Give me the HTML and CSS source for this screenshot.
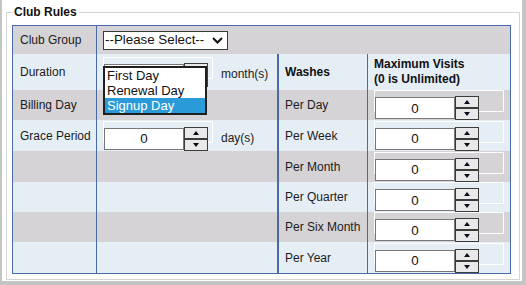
FILE: index.html
```html
<!doctype html>
<html lang="en">
<head>
    <meta charset="UTF-8">
    <title>Club Rules</title>
    <link rel="stylesheet" href="styles.css">
</head>
<body>
    <fieldset class="rules">
        <legend>Club Rules</legend>
        <table class="grid">
            <colgroup>
                <col class="c-label">
                <col class="c-field">
                <col class="c-wash">
                <col class="c-max">
            </colgroup>
            <tr class="odd h28">
                <td class="label">Club Group</td>
                <td class="field" colspan="3">
                    <div class="select">
                        <span>--Please Select--</span>
                        <svg width="11" height="7" viewBox="0 0 11 7"><polyline points="1,1 5.5,5.5 10,1" fill="none" stroke="#111" stroke-width="2"/></svg>
                    </div>
                </td>
            </tr>
            <tr class="even h36">
                <td class="label">Duration</td>
                <td class="field">
                    <div class="line">
                        <div class="num">
                            <input type="text" value="0">
                            <div class="spin"><span class="up"></span><span class="down"></span></div>
                            <ul class="popup">
                                <li>First Day</li>
                                <li>Renewal Day</li>
                                <li class="active">Signup Day</li>
                            </ul>
                        </div>
                        <span class="unit">month(s)</span>
                    </div>
                </td>
                <td class="head">Washes</td>
                <td class="head max">Maximum Visits<br>(0 is Unlimited)</td>
            </tr>
            <tr class="odd h30">
                <td class="label">Billing Day</td>
                <td class="field"></td>
                <td class="wash">Per Day</td>
                <td class="field">
                    <div class="num wide">
                        <input type="text" value="0">
                        <div class="spin"><span class="up"></span><span class="down"></span></div>
                    </div>
                </td>
            </tr>
            <tr class="even h31">
                <td class="label">Grace Period</td>
                <td class="field">
                    <div class="line">
                        <div class="num">
                            <input type="text" value="0">
                            <div class="spin"><span class="up"></span><span class="down"></span></div>
                        </div>
                        <span class="unit">day(s)</span>
                    </div>
                </td>
                <td class="wash">Per Week</td>
                <td class="field">
                    <div class="num wide">
                        <input type="text" value="0">
                        <div class="spin"><span class="up"></span><span class="down"></span></div>
                    </div>
                </td>
            </tr>
            <tr class="odd h31">
                <td class="label"></td>
                <td class="field"></td>
                <td class="wash">Per Month</td>
                <td class="field">
                    <div class="num wide">
                        <input type="text" value="0">
                        <div class="spin"><span class="up"></span><span class="down"></span></div>
                    </div>
                </td>
            </tr>
            <tr class="even h30">
                <td class="label"></td>
                <td class="field"></td>
                <td class="wash">Per Quarter</td>
                <td class="field">
                    <div class="num wide">
                        <input type="text" value="0">
                        <div class="spin"><span class="up"></span><span class="down"></span></div>
                    </div>
                </td>
            </tr>
            <tr class="odd h30">
                <td class="label"></td>
                <td class="field"></td>
                <td class="wash">Per Six Month</td>
                <td class="field">
                    <div class="num wide">
                        <input type="text" value="0">
                        <div class="spin"><span class="up"></span><span class="down"></span></div>
                    </div>
                </td>
            </tr>
            <tr class="even h31">
                <td class="label"></td>
                <td class="field"></td>
                <td class="wash">Per Year</td>
                <td class="field">
                    <div class="num wide">
                        <input type="text" value="0">
                        <div class="spin"><span class="up"></span><span class="down"></span></div>
                    </div>
                </td>
            </tr>
        </table>
    </fieldset>
</body>
</html>
```

FILE: styles.css
```css
html {
    overflow: hidden;
}
body {
    font-family: "Liberation Sans", Arial, sans-serif;
    font-size: 12px;
    color: #1c1c1c;
    background: #fff;
    margin: 0;
    height: 281px;
    border-left: 2px solid #c4c4c4;
    border-right: 4px solid #c4c4c4;
    border-bottom: 4px solid #c4c4c4;
}
.rules {
    margin: 5px 2px 1px 4px;
    padding: 0 8px 5px 5px;
    border: 1px solid #d4d4d4;
    min-width: 0;
}
.rules legend {
    font-weight: bold;
    line-height: 14px;
    padding: 0 2px;
    color: #111;
}
.grid {
    margin-top: 6px;
    width: 100%;
    table-layout: fixed;
    border-collapse: separate;
    border-spacing: 0;
    border: 1px solid #4a6aa6;
}
.c-label { width: 83px; }
.c-field { width: 181px; }
.c-wash { width: 90px; }
.c-max { width: 143px; }
.grid td {
    padding: 0;
    vertical-align: middle;
    line-height: 14px;
}
.odd td { background: #d5d3d6; }
.even td { background: #e5edf5; }
.h28 td { height: 28px; }
.h30 td { height: 30px; }
.h31 td { height: 31px; }
.h36 td { height: 36px; }
.label {
    padding-left: 7px !important;
}
.field {
    border-left: 1px solid #4a6aa6;
    padding-left: 7px !important;
}
.field[colspan] {
    padding-left: 6px !important;
}
.head,
.wash {
    padding-left: 6px !important;
}
.head {
    font-weight: bold;
    color: #111;
    border-left: 2px solid #4a6aa6;
}
.head.max {
    border-left: 1px solid #4a6aa6;
    line-height: 15px !important;
}
.wash {
    border-left: 2px solid #4a6aa6;
}
.select {
    display: inline-flex;
    align-items: center;
    justify-content: space-between;
    box-sizing: border-box;
    width: 125px;
    height: 19px;
    padding: 0 4px 0 1px;
    border: 1px solid #3a3a3a;
    background: #fff;
    font-size: 13.33px;
    color: #111;
}
.line {
    display: flex;
    align-items: center;
}
.unit {
    margin-left: 13px;
    padding-top: 4px;
}
.num {
    position: relative;
    z-index: 0;
    display: flex;
    align-items: center;
    width: 104px;
    padding-top: 6px;
}
.num::before {
    content: "";
    position: absolute;
    z-index: -1;
    left: -1px;
    top: 0;
    width: 110px;
    height: 22px;
    box-sizing: border-box;
    border: 1px solid #fff;
}
.num.wide::before {
    width: 130px;
}
.num input {
    box-sizing: border-box;
    width: 80px;
    height: 22px;
    margin: 0;
    padding: 0;
    border: 1px solid #777;
    background: #fff;
    text-align: center;
    font-family: "Liberation Sans", Arial, sans-serif;
    font-size: 13.33px;
    color: #111;
}
.spin {
    display: flex;
    flex-direction: column;
    width: 24px;
}
.spin span {
    box-sizing: border-box;
    height: 12px;
    border: 1px solid #3c3c3c;
    background: #e9e9e9;
    display: flex;
    align-items: center;
    justify-content: center;
}
.spin .up::after {
    content: "";
    border-left: 3px solid transparent;
    border-right: 3px solid transparent;
    border-bottom: 4px solid #0a0a1a;
}
.spin .down::after {
    content: "";
    border-left: 3px solid transparent;
    border-right: 3px solid transparent;
    border-top: 4px solid #0a0a1a;
}
.popup {
    position: absolute;
    z-index: 2;
    left: -1px;
    top: 9px;
    width: 104px;
    box-sizing: border-box;
    margin: 0;
    padding: 0;
    list-style: none;
    border: 2px solid #1f1f1f;
    background: #fff;
    font-size: 13px;
    color: #111;
}
.popup li {
    height: 15px;
    line-height: 15px;
    padding-left: 2px;
}
.popup li.active {
    background: #2a9bd8;
    color: #fff;
}
```
